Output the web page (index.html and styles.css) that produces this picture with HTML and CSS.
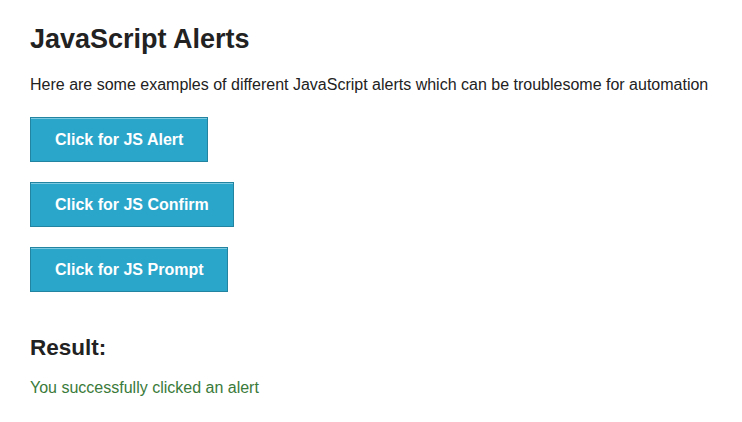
FILE: index.html
```html
<!DOCTYPE html>
<html>
<head>
<meta charset="utf-8">
<link rel="stylesheet" href="styles.css">
</head>
<body>
<div class="example">
  <h3 class="title">JavaScript Alerts</h3>
  <p class="intro">Here are some examples of different JavaScript alerts which can be troublesome for automation</p>
  <ul class="buttons">
    <li><button class="btn">Click for JS Alert</button></li>
    <li><button class="btn">Click for JS Confirm</button></li>
    <li><button class="btn">Click for JS Prompt</button></li>
  </ul>
  <h4 class="result-title">Result:</h4>
  <p class="result">You successfully clicked an alert</p>
</div>
</body>
</html>
```
FILE: styles.css
```css
html, body {
  margin: 0;
  padding: 0;
  background: #fff;
}
body {
  font-family: "Liberation Sans", Arial, sans-serif;
  color: #222;
}
.example {
  padding: 20px 30px;
}
.title {
  margin: 0;
  font-size: 27px;
  font-weight: bold;
  line-height: 1.2;
  padding-top: 3px;
}
.intro {
  margin: 20px 0 0;
  font-size: 16px;
  line-height: 1.3;
}
.buttons {
  list-style: none;
  margin: 21px 0 0;
  padding: 0;
  display: flex;
  flex-direction: column;
  align-items: flex-start;
  gap: 20px;
}
.btn {
  font-family: "Liberation Sans", Arial, sans-serif;
  font-size: 16px;
  font-weight: bold;
  color: #fff;
  background: #2ba6cb;
  border: 1px solid #2284a1;
  box-shadow: inset 0 1px 0 rgba(255,255,255,0.4);
  padding: 0 24px;
  height: 45px;
  margin: 0;
}
.result-title {
  margin: 42px 0 0;
  font-size: 22.5px;
  font-weight: bold;
  line-height: 1.2;
}
.result {
  margin: 18px 0 0;
  font-size: 16px;
  color: #3a7a3a;
}
```
